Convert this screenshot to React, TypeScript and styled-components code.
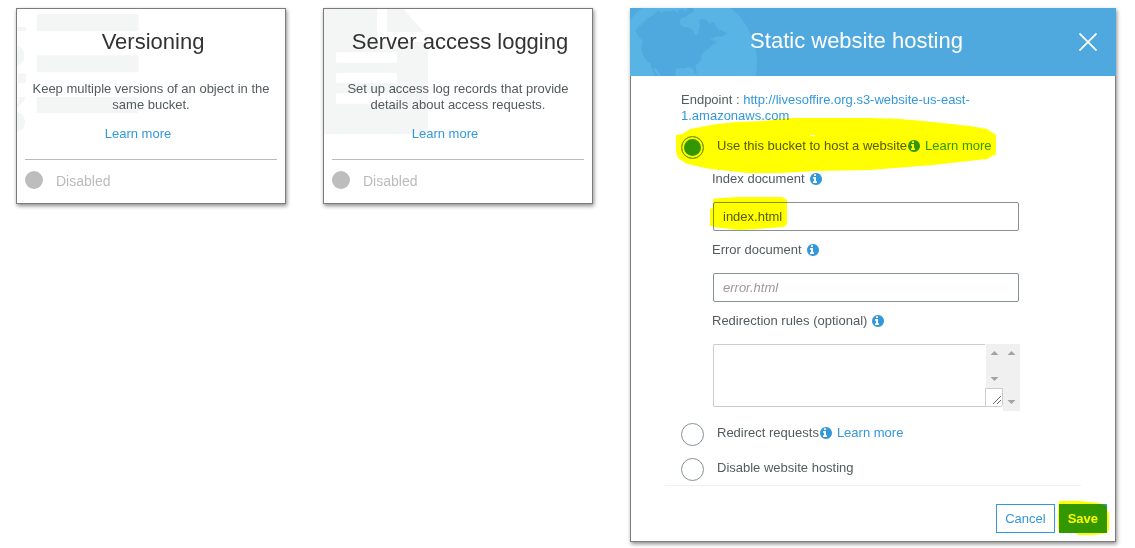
import React, { useState } from "react";
import styled, { createGlobalStyle } from "styled-components";

const GlobalStyle = createGlobalStyle`
  *, *::before, *::after { box-sizing: border-box; }
  body {
    margin: 0;
    background: #fff;
    color: #545b5e;
    font: 13px/16px "Liberation Sans", Arial, sans-serif;
  }
`;

const Page = styled.main`
  display: grid;
  grid-template-columns: minmax(0, 270fr) minmax(0, 270fr) minmax(0, 486fr);
  align-items: start;
  gap: 37px;
  padding: 8px 19px 6px 16px;
`;

const Card = styled.section`
  position: relative;
  background: #fff;
  border: 1px solid #7b7b7b;
  box-shadow: 1px 2px 4px rgba(0, 0, 0, 0.45);
  padding: 16px 8px 0;
  text-align: center;
`;

const CardArt = styled.svg`
  position: absolute;
  top: 0;
  left: 0;
  fill: #f4f6f6;
`;

const CardContent = styled.div`
  position: relative;
`;

const CardTitle = styled.h2`
  margin: 0;
  padding-left: 4px;
  color: #333;
  font-size: 22px;
  font-weight: 400;
  line-height: 34px;
`;

const CardText = styled.p`
  margin: 22px 4px 13px;
`;

const Link = styled.a`
  color: #3398db;
  text-decoration: none;
`;

const CardLink = styled.div`
  padding-right: 26px;
`;

const Status = styled.div`
  display: flex;
  align-items: center;
  gap: 13px;
  height: 44px;
  margin-top: 17px;
  padding-bottom: 2px;
  border-top: 1px solid #bbb;
  color: #bbb;
  font-size: 14px;
`;

const Dot = styled.span`
  width: 18px;
  height: 18px;
  margin-bottom: 2px;
  border-radius: 50%;
  background: #bdbdbd;
`;

const Dialog = styled.section`
  background: #fff;
  box-shadow: 1px 2px 4px rgba(0, 0, 0, 0.45);
`;

const DialogHeader = styled.header`
  position: relative;
  display: flex;
  align-items: center;
  height: 68px;
  padding: 0 19px 0 4px;
  background: #4fa9de;
`;

const Globe = styled.svg`
  position: absolute;
  top: 0;
  left: 0;
`;

const DialogTitle = styled.h2`
  position: relative;
  flex: 1;
  margin: 0;
  padding-bottom: 2px;
  color: #fff;
  font-size: 22px;
  font-weight: 400;
  line-height: 34px;
  text-align: center;
`;

const CloseButton = styled.button`
  display: flex;
  padding: 0;
  border: 0;
  background: none;
  cursor: pointer;
`;

const DialogForm = styled.form`
  border: solid #7b7b7b;
  border-width: 0 1px 1px;
  padding: 16px 0 8px;
`;

const Options = styled.div`
  display: flex;
  flex-direction: column;
  gap: 12px;
  padding: 0 95px 4px 50px;
`;

const Endpoint = styled.p`
  margin: 0;
`;

const Option = styled.div`
  position: relative;
  display: flex;
  align-items: center;
  height: 23px;
`;

const Radio = styled.input`
  appearance: none;
  width: 23px;
  height: 23px;
  margin: 0 13px 0 0;
  border: 1px solid #879196;
  border-radius: 50%;
  background: #fff;

  &:checked {
    background: #3398db;
    box-shadow: inset 0 0 0 2px #fff;
  }
`;

const OptionText = styled.div`
  display: flex;
  align-items: center;
  padding-bottom: 3px;
`;

const InfoGlyph = styled.svg`
  flex: none;
  width: 12px;
  height: 12px;
  margin: 0 5px 0 1px;
  fill: #3398db;
`;

const Fields = styled.div`
  display: flex;
  flex-direction: column;
  gap: 11px;
  padding-left: 31px;
`;

const FieldLabel = styled.div`
  display: flex;
  align-items: center;
  gap: 4px;
  margin-bottom: 15px;
`;

const Control = styled.div`
  position: relative;
  display: flex;
  padding-left: 1px;
`;

const TextInput = styled.input`
  flex: 1;
  min-width: 0;
  height: 29px;
  margin: 0 1px 0 0;
  padding: 0 9px;
  border: 1px solid #879196;
  border-radius: 2px;
  color: #545b5e;
  font: inherit;

  &::placeholder {
    color: #999;
    font-style: italic;
  }
`;

const Rules = styled.textarea`
  flex: 1;
  min-width: 0;
  height: 63px;
  padding: 8px;
  border: 1px solid #ccc;
  border-right: 0;
  border-radius: 2px 0 0 2px;
  font: inherit;
  resize: none;
`;

const ScrollArt = styled.svg`
  flex: none;
`;

const Marker = styled.svg<{ $x: number; $y: number }>`
  position: absolute;
  left: ${(p) => p.$x}px;
  top: ${(p) => p.$y}px;
  z-index: 1;
  fill: #ff0;
  mix-blend-mode: multiply;
  pointer-events: none;
`;

const Divider = styled.hr`
  height: 1px;
  margin: 0 34px 18px;
  border: 0;
  background: #f1f1f1;
`;

const Footer = styled.footer`
  display: flex;
  justify-content: flex-end;
  gap: 4px;
  padding-right: 8px;
`;

const SaveSlot = styled.div`
  position: relative;
`;

const Button = styled.button<{ $primary?: boolean }>`
  height: 29px;
  padding: 0 8px;
  border: 1px solid #3398db;
  background: ${(p) => (p.$primary ? "#3398db" : "#fff")};
  color: ${(p) => (p.$primary ? "#fff" : "#3398db")};
  font: inherit;
  font-weight: ${(p) => (p.$primary ? 700 : 400)};
  cursor: pointer;
`;

function InfoIcon() {
  return (
    <InfoGlyph viewBox="128 128 1536 1536" aria-hidden="true">
      <path d="M1024 1376v-160q0-14-9-23t-23-9h-96v-512q0-14-9-23t-23-9h-320q-14 0-23 9t-9 23v160q0 14 9 23t23 9h96v320h-96q-14 0-23 9t-9 23v160q0 14 9 23t23 9h448q14 0 23-9t9-23zM896 480v-160q0-14-9-23t-23-9h-192q-14 0-23 9t-9 23v160q0 14 9 23t23 9h192q14 0 23-9t9-23zM1664 896q0 209-103 385.5t-279.5 279.5-385.5 103-385.5-103-279.5-279.5-103-385.5 103-385.5 279.5-279.5 385.5-103 385.5 103 279.5 279.5 103 385.5z" />
    </InfoGlyph>
  );
}

function VersioningArt() {
  return (
    <CardArt width="124" height="126" viewBox="0 0 124 126" aria-hidden="true">
      <rect x="19.5" y="5.3" width="102" height="17" rx="1.5" />
      <rect x="19.5" y="46.3" width="102" height="17" rx="1.5" />
      <rect x="19.5" y="88" width="102" height="16.3" rx="1.5" />
      <rect x="0" y="18" width="9" height="4" />
      <path d="M0 37C5 38 7.5 42 7.5 47C7.5 52 4 55 0 57Z" />
      <rect x="1" y="64.5" width="8" height="9.5" />
      <path d="M1 88H8C8 91 7 92 5 94L0 99V94L3 90H1Z" />
      <path d="M0 103C5 104 8 108 8 113C8 118 5 122 0 123Z" />
    </CardArt>
  );
}

function LoggingArt() {
  return (
    <CardArt width="104" height="126" viewBox="0 0 104 126" aria-hidden="true">
      <path d="M0 0H53V33H104V125H0Z" />
      <path d="M63 0H80Q84 6 100 23H63Z" />
      <g fill="#fff">
        <rect x="12" y="43.3" width="61" height="10.5" rx="1.5" />
        <rect x="12" y="64" width="61" height="10" rx="1.5" />
        <rect x="12" y="84.5" width="61" height="10.2" rx="1.5" />
      </g>
    </CardArt>
  );
}

function GlobeArt() {
  return (
    <Globe width="130" height="68" viewBox="0 0 390 204" aria-hidden="true">
      <circle cx="169" cy="165" r="212" fill="#57b4e4" />
      <path
        fill="#4fa9de"
        d="M16 68L24 58L34 50L50 34L68 21L84 8L94 14L104 9L120 11L132 7L142 14L150 3L160 6L168 13L174 0H190L192 10L184 16L174 20L166 28L154 30L148 40L152 52L164 57L176 58L188 66L194 78L200 82L206 72L206 62L211 54L207 46L209 34L220 34L231 37L238 48L244 46L250 42L257 52L263 62L277 68L291 76L285 81L274 86L262 84L246 90L238 96L248 94L251 98L259 99L257 106L246 111L238 120L229 126L220 134L213 144L214 154L206 164L196 172L198 183L201 194L197 199L191 188L186 179L174 177L164 181L150 180L138 184L135 204H92L84 190L74 178L71 184L83 204H76L66 184L60 166L50 158L38 138L34 120L37 104L36 96L26 86Z"
      />
    </Globe>
  );
}

function InnerScrollbar() {
  return (
    <ScrollArt width="18" height="63" viewBox="0 0 18 63" aria-hidden="true">
      <rect x="1" width="17" height="63" fill="#f0f0f0" />
      <path d="M5.5 11L9.5 7L13.5 11ZM5.5 33L9.5 37L13.5 33Z" fill="#a3a3a3" />
      <path d="M0.5 63V44.5H17.5V60.5L15.5 62.5H0.5" fill="#fff" stroke="#ccc" />
      <path d="M8 60L16 52M12 60L16 56" stroke="#666" fill="none" />
    </ScrollArt>
  );
}

function OuterScrollbar() {
  return (
    <ScrollArt width="17" height="67" viewBox="0 0 17 67" aria-hidden="true">
      <rect width="17" height="67" fill="#f0f0f0" />
      <path d="M4.5 11L8.5 7L12.5 11ZM4.5 56L8.5 60L12.5 56Z" fill="#a3a3a3" />
    </ScrollArt>
  );
}

interface FeatureCardProps {
  title: string;
  text: string;
  art: React.ReactNode;
}

function FeatureCard({ title, text, art }: FeatureCardProps) {
  return (
    <Card>
      {art}
      <CardContent>
        <CardTitle>{title}</CardTitle>
        <CardText>{text}</CardText>
        <CardLink>
          <Link href="#">Learn more</Link>
        </CardLink>
        <Status>
          <Dot />
          Disabled
        </Status>
      </CardContent>
    </Card>
  );
}

export default function App() {
  const [mode, setMode] = useState("host");
  const [indexDoc, setIndexDoc] = useState("index.html");

  const radio = (value: string) => (
    <Radio
      type="radio"
      name="hosting"
      id={value}
      value={value}
      checked={mode === value}
      onChange={() => setMode(value)}
    />
  );

  return (
    <>
      <GlobalStyle />
      <Page>
        <FeatureCard
          title="Versioning"
          text="Keep multiple versions of an object in the same bucket."
          art={<VersioningArt />}
        />
        <FeatureCard
          title="Server access logging"
          text="Set up access log records that provide details about access requests."
          art={<LoggingArt />}
        />
        <Dialog>
          <DialogHeader>
            <GlobeArt />
            <DialogTitle>Static website hosting</DialogTitle>
            <CloseButton type="button" aria-label="Close">
              <svg width="18" height="18" viewBox="0 0 18 18" stroke="#fff" strokeWidth="1.7">
                <path d="M0.5 0.5L17.5 17.5M17.5 0.5L0.5 17.5" />
              </svg>
            </CloseButton>
          </DialogHeader>
          <DialogForm onSubmit={(e) => e.preventDefault()}>
            <Options>
              <Endpoint>
                Endpoint :{" "}
                <Link href="#">
                  http://livesoffire.org.s3-website-us-east-
                  <wbr />
                  1.amazonaws.com
                </Link>
              </Endpoint>
              <Option>
                {radio("host")}
                <OptionText>
                  <label htmlFor="host">Use this bucket to host a website</label>
                  <InfoIcon />
                  <Link href="#">Learn more</Link>
                </OptionText>
                <Marker $x={-5} $y={-18} width="320" height="55" viewBox="0 0 320 55">
                  <path
                    fillRule="evenodd"
                    d="M0 17L6 16L14 11L41 6L61 4L87 3L116 0H194L225 1L257 4L294 8L311 11L320 17V36L311 41L257 47L194 52L140 53L104 55H72L34 51L11 46L2 40L0 34ZM134 17H139V18H134Z"
                  />
                </Marker>
              </Option>
              <Fields>
                <div>
                  <FieldLabel>
                    <label htmlFor="index-doc">Index document</label>
                    <InfoIcon />
                  </FieldLabel>
                  <Control>
                    <TextInput
                      id="index-doc"
                      value={indexDoc}
                      onChange={(e) => setIndexDoc(e.target.value)}
                    />
                    <Marker $x={-2} $y={-5} width="77" height="33" viewBox="0 0 77 33">
                      <path d="M0 12L3 11V2L10 1L28 0H72L77 3V27L74 30L60 31L30 33L11 31L0 29Z" />
                    </Marker>
                  </Control>
                </div>
                <div>
                  <FieldLabel>
                    <label htmlFor="error-doc">Error document</label>
                    <InfoIcon />
                  </FieldLabel>
                  <Control>
                    <TextInput id="error-doc" placeholder="error.html" />
                  </Control>
                </div>
                <div>
                  <FieldLabel>
                    <label htmlFor="rules">Redirection rules (optional)</label>
                    <InfoIcon />
                  </FieldLabel>
                  <Control>
                    <Rules id="rules" />
                    <InnerScrollbar />
                    <OuterScrollbar />
                  </Control>
                </div>
              </Fields>
              <Option>
                {radio("redirect")}
                <OptionText>
                  <label htmlFor="redirect">Redirect requests</label>
                  <InfoIcon />
                  <Link href="#">Learn more</Link>
                </OptionText>
              </Option>
              <Option>
                {radio("disable")}
                <OptionText>
                  <label htmlFor="disable">Disable website hosting</label>
                </OptionText>
              </Option>
            </Options>
            <Divider />
            <Footer>
              <Button type="button">Cancel</Button>
              <SaveSlot>
                <Button type="submit" $primary>
                  Save
                </Button>
                <Marker $x={-1} $y={-3} width="51" height="34" viewBox="0 0 51 34">
                  <path d="M1 0H22L40 2L47 4L49 6V10L51 12V28L49 32L36 34H20L18 32H1L0 26V7Z" />
                </Marker>
              </SaveSlot>
            </Footer>
          </DialogForm>
        </Dialog>
      </Page>
    </>
  );
}
